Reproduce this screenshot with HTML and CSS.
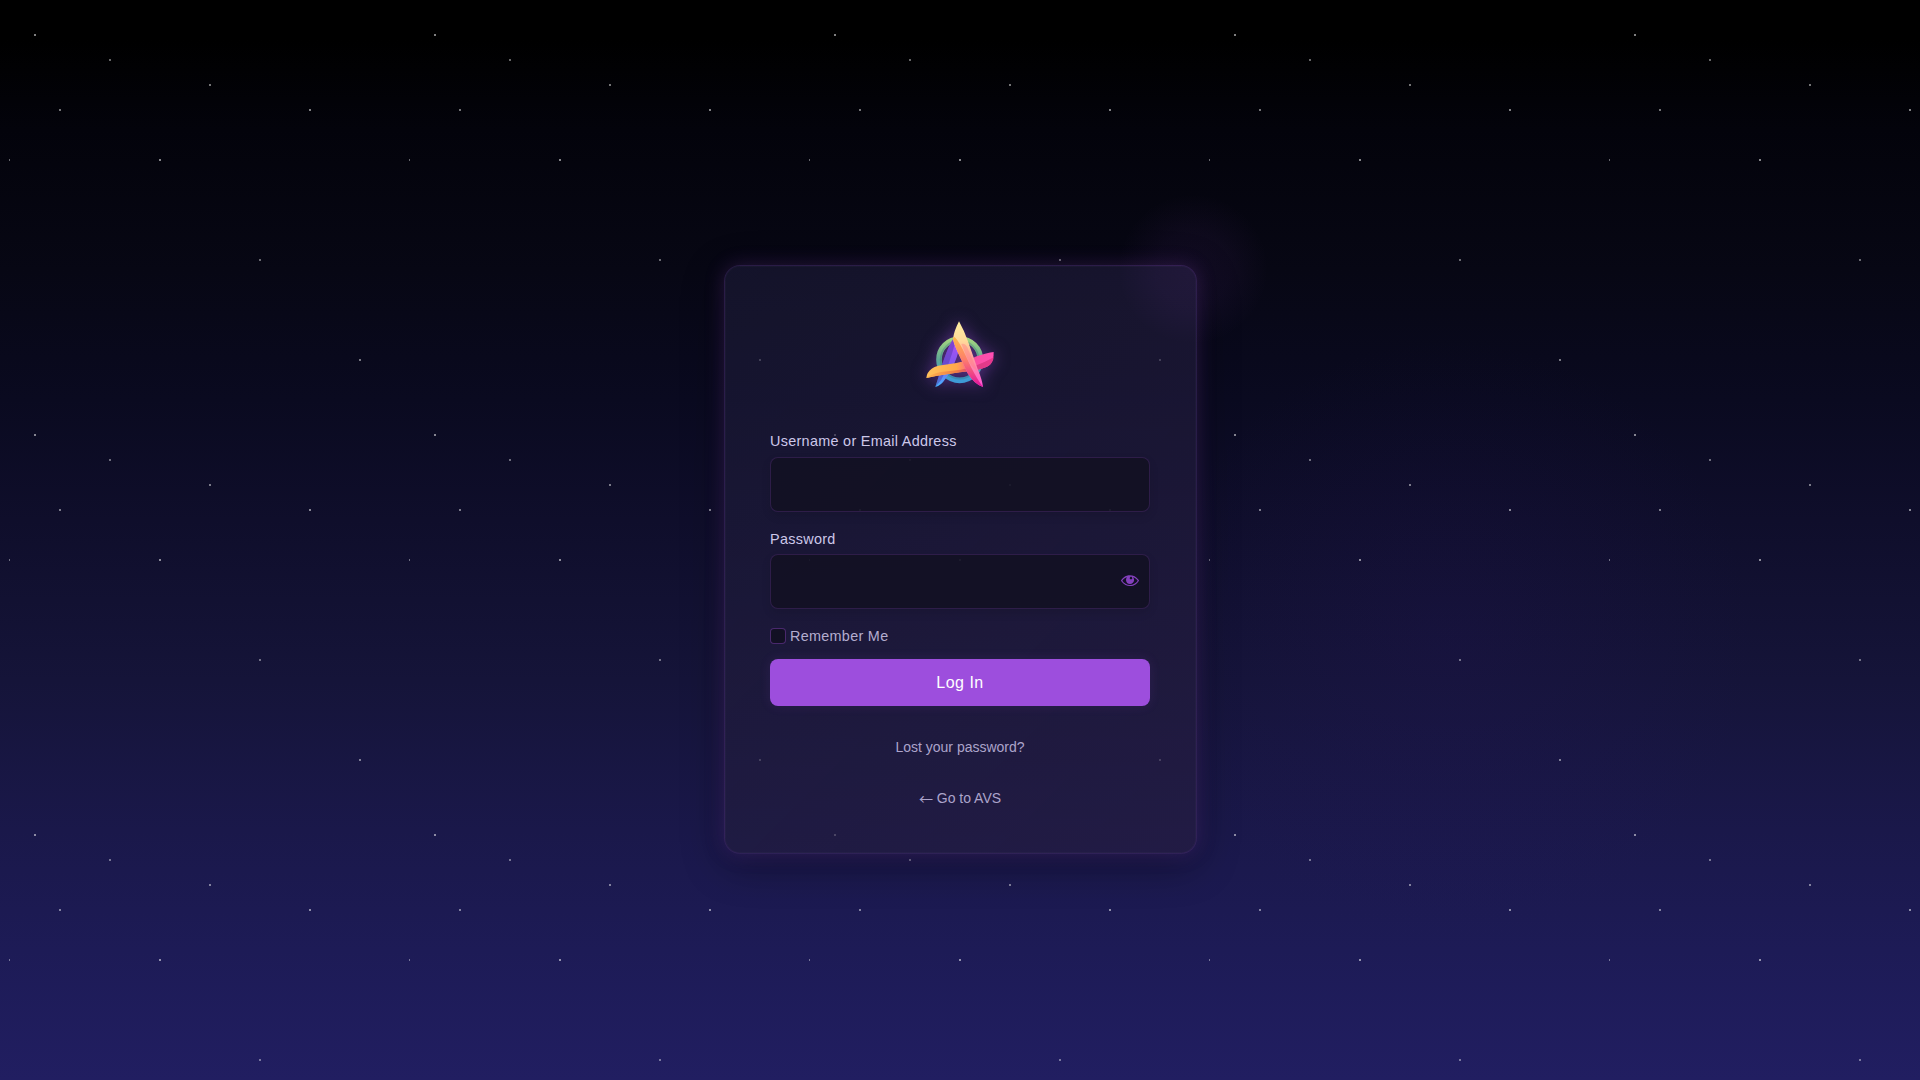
FILE: index.html
```html
<!DOCTYPE html>
<html lang="en">
<head>
<meta charset="utf-8">
<title>Log In</title>
<link rel="stylesheet" href="styles.css">
</head>
<body class="login">
<main class="card">
  <div class="orb"></div>
  <a class="logo" href="#" aria-label="AVS">
    <svg viewBox="0 3 270 267" width="90" height="89">
      <defs>
        <linearGradient id="ring" x1="0" y1="0" x2="0" y2="1"><stop offset="0" stop-color="#a5d67f"/><stop offset=".5" stop-color="#5fa795"/><stop offset="1" stop-color="#3e9bd6"/></linearGradient>
        <linearGradient id="back" x1="0" y1="0" x2="0" y2="1"><stop offset="0" stop-color="#b44df5"/><stop offset=".5" stop-color="#8259f0"/><stop offset="1" stop-color="#45b4ff"/></linearGradient>
        <linearGradient id="bar" x1="0" y1="0" x2="1" y2="0"><stop offset="0" stop-color="#ffc35c"/><stop offset=".45" stop-color="#ffa84a"/><stop offset=".7" stop-color="#fa4fa0"/><stop offset="1" stop-color="#ff4eb4"/></linearGradient>
        <linearGradient id="barlow" x1="0" y1="0" x2="1" y2="0"><stop offset="0" stop-color="#ffb64f"/><stop offset=".45" stop-color="#ef7d45"/><stop offset=".7" stop-color="#d93d82"/><stop offset="1" stop-color="#e8388f"/></linearGradient>
        <linearGradient id="front" x1="0" y1="0" x2="0" y2="1"><stop offset="0" stop-color="#fff0a0"/><stop offset=".3" stop-color="#ffd99a"/><stop offset=".55" stop-color="#ffa29c"/><stop offset="1" stop-color="#ff4fd8"/></linearGradient>
        <linearGradient id="edge" x1="0" y1="0" x2="0" y2="1"><stop offset="0" stop-color="#ffb84a"/><stop offset=".45" stop-color="#fd7f6b"/><stop offset="1" stop-color="#e010a0"/></linearGradient>
      </defs>
      <circle cx="134" cy="149" r="62" fill="none" stroke="url(#ring)" stroke-width="17"/>
      <circle cx="134" cy="149" r="57" fill="none" stroke="#246a78" stroke-opacity=".3" stroke-width="5"/>
      <path d="M115 86C101 107 90 138 80 169Q70 205 61 231Q78 227 91 207Q119 173 134 112Z" fill="url(#back)"/>
      <path d="M115 86C101 107 90 138 80 169Q70 205 61 231L78 211Q103 165 121 96Z" fill="#4b35a8" opacity=".45"/>
      <path d="M34 204Q35 187 50 176Q65 166 100 163Q150 157 185 139Q216 128 236 126Q237 148 225 164Q210 176 170 183Q98 190 34 204Z" fill="url(#bar)"/>
      <path d="M34 204Q54 187 98 184L137 179Q184 171 236 142Q234 157 225 164Q210 176 170 183Q98 190 34 204Z" fill="url(#barlow)"/>
      <path d="M132 34Q117 63 114 87Q117 103 129 128L158 190Q178 223 204 231Q202 210 187 174L160 97Q148 62 132 34Z" fill="url(#front)"/>
      <path d="M114 87Q117 103 129 128L158 190Q178 223 204 231Q187 208 169 173L143 118Q125 82 116 80Z" fill="url(#edge)"/>
      <path d="M139 102Q153 99 160 119L187 183Q165 170 153 136Z" fill="#ff777f" opacity=".4"/>
    </svg>
  </a>
  <form class="form">
    <label class="label" for="user">Username or Email Address</label>
    <input class="input" id="user" type="text">
    <label class="label label-password" for="pass">Password</label>
    <div class="password">
      <input class="input" id="pass" type="password">
      <button class="eye" type="button" aria-label="Show password">
        <svg viewBox="0 0 20 20" width="20" height="20"><path fill="currentColor" d="M18.3 9.500C15 4.900 8.500 3.800 3.900 7.200c-1.200.9-2.200 2.100-3 3.400.2.400.5.800.8 1.200 3.300 4.600 9.600 5.600 14.200 2.400.9-.7 1.700-1.400 2.400-2.400.3-.4.500-.8.800-1.200-.3-.4-.5-.8-.8-1.100zm-8.200-2.300c.5-.5 1.300-.5 1.800 0s.5 1.300 0 1.800-1.300.5-1.800 0-.5-1.300 0-1.800zm-.1 7.700c-3.100 0-6-1.600-7.700-4.200C3.500 9 5.100 7.800 7 7.200c-.7.8-1 1.700-1 2.700 0 2.200 1.700 4.100 4 4.100 2.200 0 4.100-1.700 4.100-4v-.1c0-1-.4-2-1.100-2.700 1.900.6 3.500 1.800 4.700 3.500-1.700 2.600-4.600 4.200-7.700 4.200z"/></svg>
      </button>
    </div>
    <label class="remember"><input class="check" type="checkbox"><span>Remember Me</span></label>
    <button class="submit" type="button">Log In</button>
  </form>
  <a class="link" href="#">Lost your password?</a>
  <a class="link" href="#"><span class="arrow">←</span> Go to AVS</a>
</main>
</body>
</html>
```
FILE: styles.css
```css
* { box-sizing: border-box; }

.login {
  margin: 0;
  height: 1080px;
  padding-top: 265px;
  overflow: hidden;
  font-family: "Liberation Sans", Arial, sans-serif;
  color: #cdc8ea;
  background:
    radial-gradient(1px 1px at 35px 35px, rgba(255,255,255,.5) 99%, transparent) 0 0 / 400px 400px,
    radial-gradient(1px 1px at 110px 60px, rgba(255,255,255,.4) 99%, transparent) 0 0 / 400px 400px,
    radial-gradient(1px 1px at 210px 85px, rgba(255,255,255,.45) 99%, transparent) 0 0 / 400px 400px,
    radial-gradient(1px 1px at 60px 110px, rgba(255,255,255,.45) 99%, transparent) 0 0 / 400px 400px,
    radial-gradient(1px 1px at 310px 110px, rgba(255,255,255,.5) 99%, transparent) 0 0 / 400px 400px,
    radial-gradient(1px 1px at 160px 160px, rgba(255,255,255,.52) 99%, transparent) 0 0 / 400px 400px,
    radial-gradient(.6px 1px at 9.5px 160px, rgba(255,255,255,.4) 99%, transparent) 0 0 / 400px 400px,
    radial-gradient(1px 1px at 260px 260px, rgba(255,255,255,.4) 99%, transparent) 0 0 / 400px 400px,
    radial-gradient(1px 1px at 360px 360px, rgba(255,255,255,.45) 99%, transparent) 0 0 / 400px 400px,
    radial-gradient(circle 300px at 1450px 640px, rgba(36,20,90,.2), transparent),
    linear-gradient(180deg, #000 0, #000 40px, #03030b 130px, #070714 270px, #0a0a20 400px, #0f0e2b 520px, #151439 680px, #1a184a 830px, #1d1b56 950px, #211e61 1080px);
}

.card {
  position: relative;
  display: flex;
  flex-direction: column;
  align-items: center;
  width: 473px;
  height: 589px;
  margin: 0 auto;
  padding: 45px;
  border: 1px solid rgba(157, 78, 221, .14);
  border-radius: 16px;
  background: linear-gradient(135deg, rgba(29, 28, 57, .6), rgba(38, 29, 65, .65));
  box-shadow:
    0 0 20px rgba(157, 78, 221, .22),
    0 10px 40px rgba(0, 0, 0, .4),
    inset 0 0 0 1px rgba(255, 255, 255, .025);
}

.orb {
  position: absolute;
  top: -72px;
  right: -72px;
  width: 150px;
  height: 150px;
  background: radial-gradient(circle closest-side, rgba(157, 78, 221, .07), rgba(157, 78, 221, .05) 50%, transparent);
}

.logo svg {
  display: block;
  filter: drop-shadow(0 0 8px rgba(157, 78, 221, .5));
}

.form {
  display: flex;
  flex-direction: column;
  width: 380px;
  margin-top: 31px;
}

.label {
  height: 26px;
  line-height: 20px;
  font-size: 14.4px;
  letter-spacing: .3px;
}

.label-password {
  height: 25px;
  margin-top: 1px;
}

.input {
  display: block;
  width: 100%;
  height: 55px;
  margin: 0 0 16px;
  padding: 0 16px;
  border: 1px solid rgba(157, 78, 221, .2);
  border-radius: 8px;
  outline: 0;
  background: rgba(17, 16, 33, .8);
  box-shadow: 0 4px 10px rgba(0, 0, 0, .1);
}

.password { position: relative; }

.eye {
  position: absolute;
  top: 16px;
  right: 10px;
  padding: 0;
  border: 0;
  background: none;
  color: #8440bd;
}

.eye svg { display: block; }

.remember {
  display: flex;
  align-items: center;
  gap: 4px;
  height: 22px;
  font-size: 14.4px;
  letter-spacing: .3px;
  color: #b4adcf;
}

.check {
  appearance: none;
  width: 16px;
  height: 16px;
  margin: 0;
  border: 1px solid rgba(157, 78, 221, .4);
  border-radius: 4px;
  background: #121024;
}

.submit {
  height: 47px;
  margin: 12px 0 0;
  border: 0;
  border-radius: 8px;
  background: #9d4edd;
  box-shadow: 0 0 12px rgba(157, 78, 221, .12);
  font: 16px "Liberation Sans", Arial, sans-serif;
  letter-spacing: .5px;
  color: #fff;
}

.link {
  height: 20px;
  margin-top: 31px;
  font-size: 14px;
  line-height: 20px;
  color: #aca4cb;
  text-decoration: none;
}

.arrow {
  font-family: "Noto Sans CJK JP", sans-serif;
  line-height: 1;
  vertical-align: -1px;
}
```
